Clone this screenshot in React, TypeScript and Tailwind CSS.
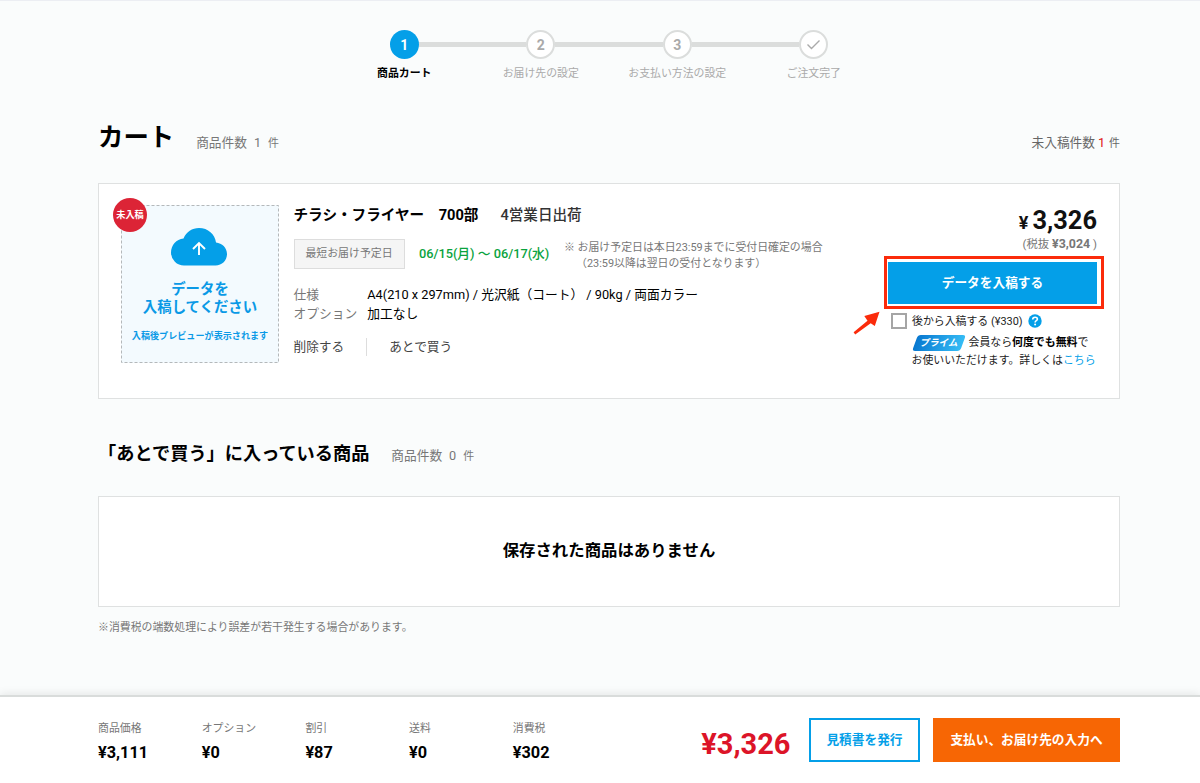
import React from 'react';
import clsx from 'clsx';

const steps = [
    { mark: "1", label: "商品カート", active: true },
    { mark: "2", label: "お届け先の設定" },
    { mark: "3", label: "お支払い方法の設定" },
    { mark: "check", label: "ご注文完了" },
];

const totals = [
    { label: "商品価格", value: "¥3,111" },
    { label: "オプション", value: "¥0" },
    { label: "割引", value: "¥87" },
    { label: "送料", value: "¥0" },
    { label: "消費税", value: "¥302" },
];

const Stepper = () => {
    return (
        <div className="flex mx-auto w-[546px] pt-[29px]">
            {steps.map((step, i) => (
                <div key={step.mark} className="flex-1 flex flex-col items-center">
                    <div className="flex items-center w-full">
                        <div className={clsx("flex-1 h-[5px]", i > 0 && "bg-[#dbdddc]")} />
                        <div
                            className={clsx(
                                "w-[29px] h-[29px] shrink-0 rounded-full flex items-center justify-center text-[14px] leading-none",
                                step.active
                                    ? "bg-[#049fe8] text-white font-bold"
                                    : "bg-white border-2 border-[#dbdddc] text-[#aaa] font-bold"
                            )}
                        >
                            {step.mark === "check" ? (
                                <svg width="15" height="12" viewBox="0 0 15 12" fill="none" stroke="#aaa" strokeWidth="1.4">
                                    <path d="M1.5 5.5 5.5 9.5 13.5 1.5" />
                                </svg>
                            ) : (
                                step.mark
                            )}
                        </div>
                        <div className={clsx("flex-1 h-[5px]", i < steps.length - 1 && "bg-[#dbdddc]")} />
                    </div>
                    <div
                        className={clsx(
                            "mt-[6px] text-[10.9px] leading-[18px] whitespace-nowrap",
                            step.active ? "font-bold text-black" : "text-[#aaa]"
                        )}
                    >
                        {step.label}
                    </div>
                </div>
            ))}
        </div>
    );
};

const Preview = () => {
    return (
        <div className="relative w-[158px] h-[158px] shrink-0 mt-[21px] ml-[22px] bg-[#f3fafe] text-[#0a99e6]">
            <svg className="absolute inset-0" width="158" height="158" fill="none">
                <rect x="0.5" y="0.5" width="157" height="157" stroke="#b4b8ba" strokeDasharray="3 2" />
            </svg>
            <div className="absolute -left-[8px] -top-[7px] w-[34px] h-[34px] rounded-full bg-[#dc2436] text-white text-[9.2px] font-bold flex items-center justify-center whitespace-nowrap">
                未入稿
            </div>
            <div className="flex flex-col items-center pt-[23px]">
                <svg width="56" height="38" viewBox="0 0 56 38" className="-ml-[2px]">
                    <path
                        d="M13 37.5A13 13 0 0 1 0 24.7C0 17 5.300 11 12.500 10.400C15.500 4 21 0 28 0C37 0 44 6.300 45 14.500C51 15 56 19.800 56 26C56 32.500 51 37.500 44.500 37.500Z"
                        fill="#049fe8"
                    />
                    <path d="M28 27V15.500M22 21 28 15 34 21" stroke="#fff" strokeWidth="1.9" fill="none" />
                </svg>
                <div className="mt-[15px] text-[14.4px] leading-[18px] font-bold text-center whitespace-nowrap">
                    データを
                    <br />
                    入稿してください
                </div>
                <div className="mt-[11px] text-[9.1px] leading-[16px] font-bold whitespace-nowrap">
                    入稿後プレビューが表示されます
                </div>
            </div>
        </div>
    );
};

const ProductInfo = () => {
    return (
        <div className="ml-[14.5px] pt-[20px] whitespace-nowrap">
            <div className="flex text-[14.6px] leading-[22px] font-bold text-black">
                <span>チラシ・フライヤー　700部</span>
                <span className="ml-[22px] font-medium text-[#333]">4営業日出荷</span>
            </div>
            <div className="flex mt-[13px]">
                <div className="w-[111px] h-[30px] border border-[#ddd] bg-[#f5f5f5] text-[#777] text-[10.9px] leading-[28px] text-center">
                    最短お届け予定日
                </div>
                <div className="ml-[14.5px] w-[145px] text-[12.75px] leading-[29px] font-medium text-[#0aa33e]">
                    06/15(月) 〜 06/17(水)
                </div>
                <div className="pt-px text-[10.9px] leading-[16px] text-[#777]">
                    <div>※ お届け予定日は本日23:59までに受付日確定の場合</div>
                    <div className="pl-[12px]">（23:59以降は翌日の受付となります）</div>
                </div>
            </div>
            <div className="grid grid-cols-[73.8px_auto] mt-[14px] text-[12.75px] leading-[18.5px] text-[#777]">
                <span>仕様</span>
                <span className="text-black">A4(210 x 297mm) / 光沢紙（コート） / 90kg / 両面カラー</span>
                <span>オプション</span>
                <span className="text-black">加工なし</span>
            </div>
            <div className="flex items-center mt-[15px] text-[12.7px] leading-[18px] text-[#444]">
                <span className="w-[72.7px]">削除する</span>
                <span className="w-px h-[18px] bg-[#ddd]" />
                <span className="ml-[22px]">あとで買う</span>
            </div>
        </div>
    );
};

const Submission = () => {
    return (
        <div className="relative ml-auto w-[235px] pt-[22px] whitespace-nowrap">
            <div className="flex justify-end items-baseline pr-[22px] font-bold text-[#111] leading-[28px]">
                <span className="text-[18px] mr-[4px]">¥</span>
                <span className="text-[25.4px]">3,326</span>
            </div>
            <div className="-mt-px pr-[22px] text-right text-[11.4px] leading-[16px] text-[#777]">
                (税抜 <b className="font-bold text-[12.4px]">¥3,024</b> )
            </div>
            <div className="mt-[4px] w-[220px] h-[53px] border-[3px] border-[#fb2b0b] bg-white pl-px pr-[4px] pt-[3px] pb-[2px]">
                <button className="block w-full h-full bg-[#049fe8] text-white font-bold text-[12.7px] leading-[38px] pb-[1px]">
                    データを入稿する
                </button>
            </div>
            <svg className="absolute -left-[31px] top-[127px]" width="28" height="24" viewBox="0 0 28 24" fill="#fb2b0b">
                <path d="M0.600 21.200 14.500 9.800 11.300 5 26.500 0.800 21.800 15 17.700 12.300 2.200 23.400Z" />
            </svg>
            <div className="flex items-center mt-[3px] pl-[7px] h-[17px]">
                <span className="w-[16px] h-[16px] border-2 border-[#a5a5a5] bg-white" />
                <span className="ml-[5px] pt-[1px] text-[10.9px] leading-[17px] text-[#222]">後から入稿する (¥330)</span>
                <svg className="ml-[5px]" width="14" height="14" viewBox="0 0 14 14">
                    <circle cx="7" cy="7" r="6.700" fill="#049fe8" />
                    <path d="M4.700 5.500C4.700 4.100 5.700 3.200 7.100 3.200C8.500 3.200 9.400 4.100 9.400 5.200C9.400 6.700 7.100 6.700 7.100 8.400" stroke="#fff" strokeWidth="1.600" fill="none" />
                    <circle cx="7.100" cy="10.400" r="1" fill="#fff" />
                </svg>
            </div>
            <div className="pl-[27.5px] mt-[5px] text-[10.9px] leading-[18px] text-[#222]">
                <div className="flex items-center">
                    <span className="relative flex items-center justify-center w-[54px] h-[16px] mr-[3px] text-white text-[9.5px] leading-none font-bold italic">
                        <span className="absolute inset-y-0 inset-x-[3px] -skew-x-[20deg] rounded-[3px] bg-linear-to-r from-[#0878d0] to-[#35bcf5]" />
                        <span className="relative">プライム</span>
                    </span>
                    <span>
                        会員なら<b className="font-bold text-black">何度でも無料</b>で
                    </span>
                </div>
                <div>
                    お使いいただけます。詳しくは<a className="text-[#049fe8]">こちら</a>
                </div>
            </div>
        </div>
    );
};

const Count = ({ value }: any) => {
    return (
        <div className="flex items-baseline text-[12.7px] leading-[20px] text-[#777]">
            <span>商品件数</span>
            <span className="ml-[7px]">{value}</span>
            <span className="ml-[7px] text-[10.9px]">件</span>
        </div>
    );
};

const Footer = () => {
    return (
        <footer className="h-[88px] shrink-0 flex bg-white border-t-2 border-[#d9dcdb] shadow-[0_-2px_8px_rgba(0,0,0,0.08)] pl-[98px] pr-[80px]">
            {totals.map((item) => (
                <div key={item.label} className="w-[103.7px] shrink-0 pt-[23px]">
                    <div className="text-[10.9px] leading-[18px] text-[#777]">{item.label}</div>
                    <div className="mt-[5px] text-[16.3px] leading-[20px] font-bold text-black">{item.value}</div>
                </div>
            ))}
            <div className="ml-auto pt-[27px] text-[29px] leading-[40px] font-bold text-[#dc1428]">¥3,326</div>
            <button className="ml-[18.5px] mt-[21px] w-[111px] h-[44px] border-[2px] border-[#049fe8] text-[#049fe8] bg-white text-[12.7px] font-bold">
                見積書を発行
            </button>
            <button className="ml-[13px] mt-[21px] w-[187px] h-[44px] bg-[#f76604] text-white text-[12.7px] font-bold whitespace-nowrap">
                支払い、お届け先の入力へ
            </button>
        </footer>
    );
};

const App = () => {
    return (
        <div className="w-[1200px] h-[783px] overflow-hidden flex flex-col bg-[#fafcfc] border-t border-[#eceef3] font-['Roboto','Noto_Sans_CJK_JP',sans-serif]">
            <main className="flex-1 pl-[98px] pr-[80px]" lang="ja">
                <Stepper />
                <div className="flex items-end h-[44px] mt-[29px] pb-[2px]">
                    <h1 className="text-[25.4px] leading-[34px] font-bold text-black">カート</h1>
                    <div className="ml-[22px] flex-1 flex justify-between">
                        <Count value="1" />
                        <div className="flex items-baseline text-[12.7px] leading-[20px] text-[#666]">
                            <span>未入稿件数</span>
                            <span className="ml-[3px] text-[#e01414]">1</span>
                            <span className="ml-[4px] text-[10.9px]">件</span>
                        </div>
                    </div>
                </div>
                <section className="flex mt-[27px] h-[216px] bg-white border border-[#dfe1e1]">
                    <Preview />
                    <ProductInfo />
                    <Submission />
                </section>
                <div className="flex items-center mt-[41px] h-[28px]">
                    <h2 className="text-[18.2px] leading-[28px] font-bold text-black">「あとで買う」に入っている商品</h2>
                    <div className="ml-[22px] mt-[5px]">
                        <Count value="0" />
                    </div>
                </div>
                <section className="mt-[28px] h-[111px] bg-white border border-[#dfe1e1] flex items-center justify-center text-[16.4px] font-bold text-black">
                    保存された商品はありません
                </section>
                <p className="mt-[12px] text-[10.9px] leading-[18px] text-[#777]">
                    ※消費税の端数処理により誤差が若干発生する場合があります。
                </p>
            </main>
            <Footer />
        </div>
    );
};

export default App;
